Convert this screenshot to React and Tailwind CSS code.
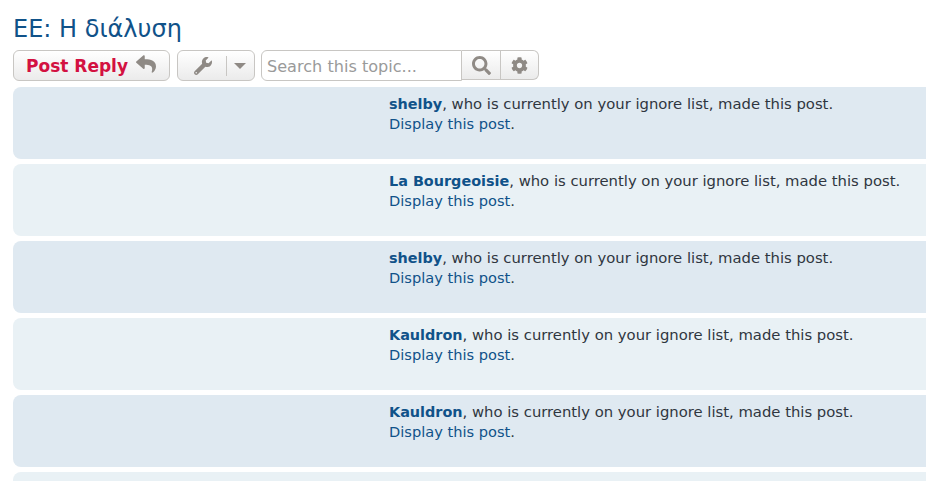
import React from "react";
import { FaReply, FaWrench, FaSearch, FaCog } from "react-icons/fa";

function Row({ name, alt }) {
  return (
    <div className={`h-[72px] shrink-0 rounded-l-lg pl-[376px] pt-[7px] text-[14.8px] leading-[19px] text-[#2f3640] ${alt ? "bg-[#e9f1f5]" : "bg-[#dfe9f1]"}`}>
      {name && (
        <>
          <div className="whitespace-nowrap">
            <b className="text-[14.4px] font-bold text-[#105289]">{name}</b>, who is currently on your ignore list, made this post.
          </div>
          <div className="whitespace-nowrap">
            <span className="text-[14.6px] text-[#105289]">Display this post</span>.
          </div>
        </>
      )}
    </div>
  );
}

const grad = "bg-gradient-to-b from-white to-[#ebebeb]";

export default function App() {
  return (
    <div className="h-[481px] w-[926px] overflow-hidden bg-white pl-[13px] font-['DejaVu_Sans','Liberation_Sans',sans-serif]">
      <h1 className="pt-[14px] text-[24px] leading-[31px] font-normal text-[#105289]">ΕΕ: Η διάλυση</h1>
      <div className="mt-[5px] flex h-[31px] items-stretch">
        <div className={`flex w-[157px] items-center rounded-md border border-[#c8c6c3] pl-[12px] pt-[2px] ${grad}`}>
          <span className="text-[17px] leading-none font-bold whitespace-nowrap text-[#d31141]">Post Reply</span>
          <FaReply className="ml-[8px] -mt-[5px] text-[#8f8a85]" size={20} />
        </div>
        <div className={`ml-[7px] flex w-[78px] items-center rounded-md border border-[#c8c6c3] ${grad}`}>
          <div className="flex w-[48px] justify-center pl-[1px]">
            <FaWrench className="-scale-x-100 rotate-90 text-[#8f8a85]" size={18} />
          </div>
          <div className="h-[20px] w-px bg-[#c8c6c3]" />
          <div className="ml-[7px] h-0 w-0 border-x-[6px] border-t-[6px] border-x-transparent border-t-[#8f8a85]" />
        </div>
        <div className="ml-[6px] flex w-[201px] items-center rounded-l-md border border-[#c8c6c3] bg-white pl-[5px] pt-[3px] text-[16.1px] whitespace-nowrap text-[#9a9a9a]">
          Search this topic...
        </div>
        <div className={`flex h-[30px] w-[39px] items-center justify-center border-y border-r border-[#c8c6c3] ${grad}`}>
          <FaSearch className="text-[#8f8a85]" size={19} />
        </div>
        <div className={`flex h-[30px] w-[38px] items-center justify-center rounded-r-md border-y border-r border-[#c8c6c3] ${grad}`}>
          <FaCog className="text-[#8f8a85]" size={17} />
        </div>
      </div>
      <div className="mt-[6px] flex flex-col gap-[5px]">
        <Row name="shelby" />
        <Row name="La Bourgeoisie" alt />
        <Row name="shelby" />
        <Row name="Kauldron" alt />
        <Row name="Kauldron" />
        <Row alt />
      </div>
    </div>
  );
}
